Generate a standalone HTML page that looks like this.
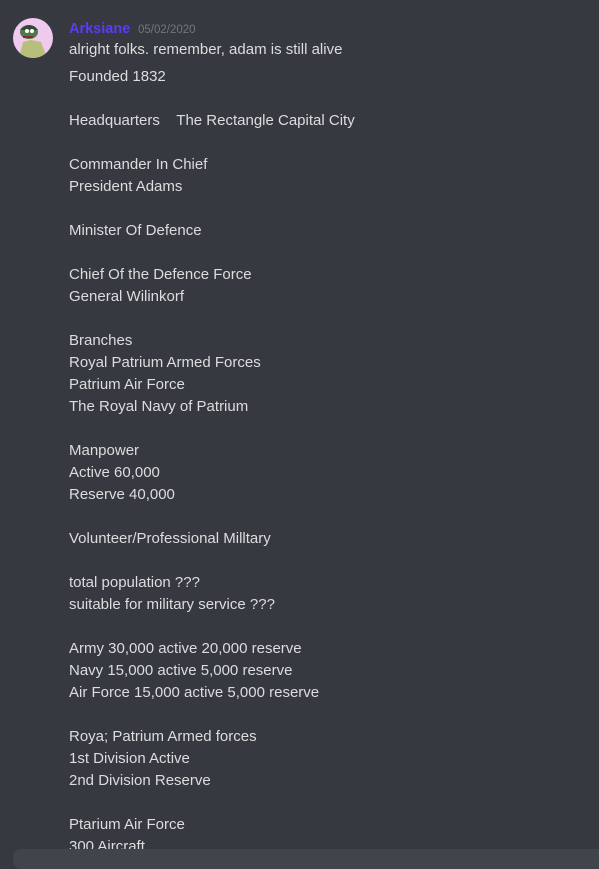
<!DOCTYPE html>
<html><head><meta charset="utf-8"><style>
html,body{margin:0;padding:0;background:#36393f;width:599px;height:858px;overflow:hidden;font-family:"Liberation Sans",sans-serif;}
.av{position:absolute;left:13px;top:18px;width:40px;height:40px;border-radius:50%;background:#efc9ee;overflow:hidden}
.name{position:absolute;left:69px;top:19px;font-size:14.5px;color:#5b3bf6;font-weight:bold;line-height:20px}
.date{position:absolute;left:138px;top:22px;font-size:11.5px;color:#72767d;line-height:16px}
.l1{position:absolute;left:69px;top:39px;font-size:15px;color:#dcddde;line-height:22px}
.body{position:absolute;left:69px;top:66px;font-size:15px;color:#dcddde;line-height:22px;white-space:pre}
.bar{position:absolute;left:13px;top:849px;width:600px;height:20px;background:#40444b;border-radius:8px}
</style></head><body>
<div class="av"><svg width="40" height="40" viewBox="0 0 40 40">
<path d="M6 40 L10 24 L18 22 L28 24 L34 40Z" fill="#b8bf7a"/>
<ellipse cx="16" cy="14" rx="9" ry="7" fill="#4d7a4a"/>
<path d="M7 12 Q16 2 25 12Z" fill="#2f4a35"/>
<circle cx="14" cy="13" r="2" fill="#fff"/><circle cx="19" cy="13" r="2" fill="#fff"/>
<rect x="10" y="18" width="10" height="2" fill="#8a2b2b"/>
</svg></div>
<div class="name">Arksiane</div>
<div class="date">05/02/2020</div>
<div class="l1">alright folks. remember, adam is still alive</div>
<div class="body">Founded 1832

Headquarters    The Rectangle Capital City

Commander In Chief
President Adams

Minister Of Defence

Chief Of the Defence Force
General Wilinkorf

Branches
Royal Patrium Armed Forces
Patrium Air Force
The Royal Navy of Patrium

Manpower
Active 60,000
Reserve 40,000

Volunteer/Professional Milltary

total population ???
suitable for military service ???

Army 30,000 active 20,000 reserve
Navy 15,000 active 5,000 reserve
Air Force 15,000 active 5,000 reserve

Roya; Patrium Armed forces
1st Division Active
2nd Division Reserve

Ptarium Air Force
300 Aircraft</div>
<div class="bar"></div>
</body></html>
